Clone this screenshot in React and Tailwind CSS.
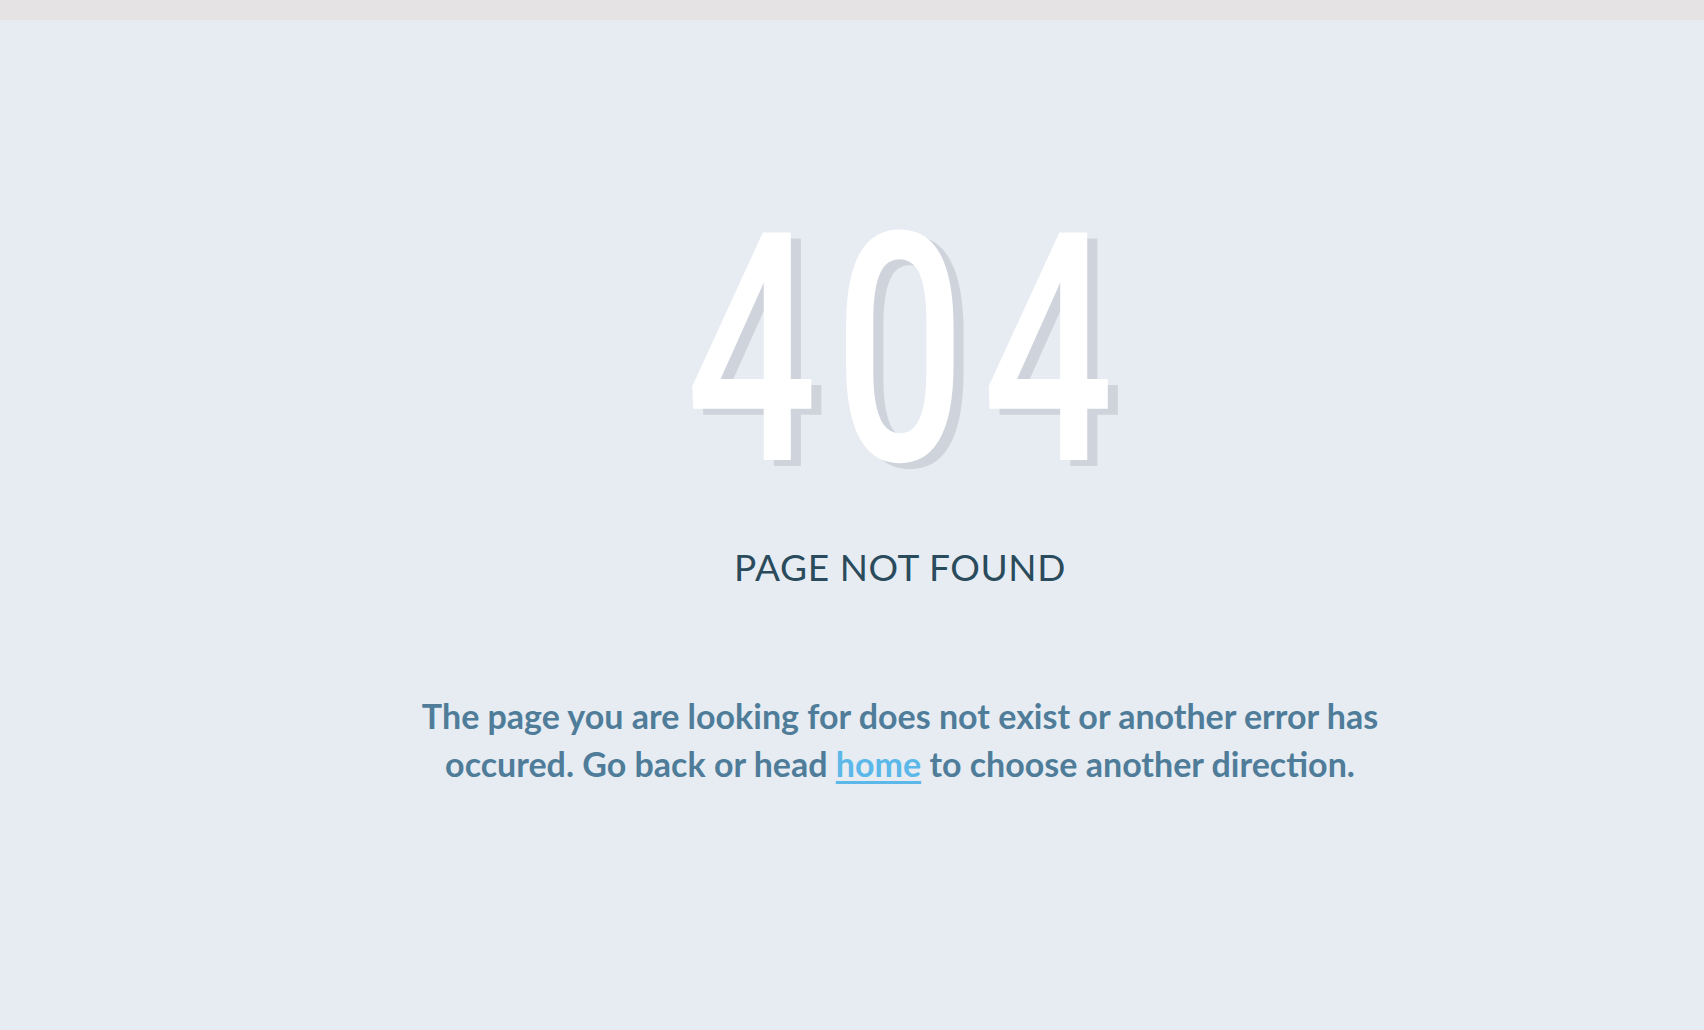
import React from "react";

const NotFound = () => {
  return (
    <div className="min-h-screen flex flex-col bg-[#e7ecf3]">
      <div className="h-5 bg-[#e6e3e5]" />
      <main className="flex-1 flex flex-col items-center pl-24 pt-[171px]">
        <h1 className="pl-[24px] font-['Roboto',sans-serif] font-medium text-[320px] leading-none text-white tracking-[24px] scale-x-[0.72] [text-shadow:14px_6px_0_#cfd4dc]">
          404
        </h1>
        <h2 className="mt-[37px] font-['Lato',sans-serif] text-[37px] leading-none text-[#2a4b5b] tracking-[0.6px]">
          PAGE NOT FOUND
        </h2>
        <p className="mt-[107px] max-w-[1000px] text-center font-['Lato',sans-serif] font-bold text-[34px] leading-[48px] text-[#4f7d99]">
          The page you are looking for does not exist or another error has
          occured. Go back or head{" "}
          <a href="#" className="text-[#5bb8e8] underline underline-offset-4">
            home
          </a>{" "}
          to choose another direction.
        </p>
      </main>
    </div>
  );
};

export default function App() {
  return <NotFound />;
}
